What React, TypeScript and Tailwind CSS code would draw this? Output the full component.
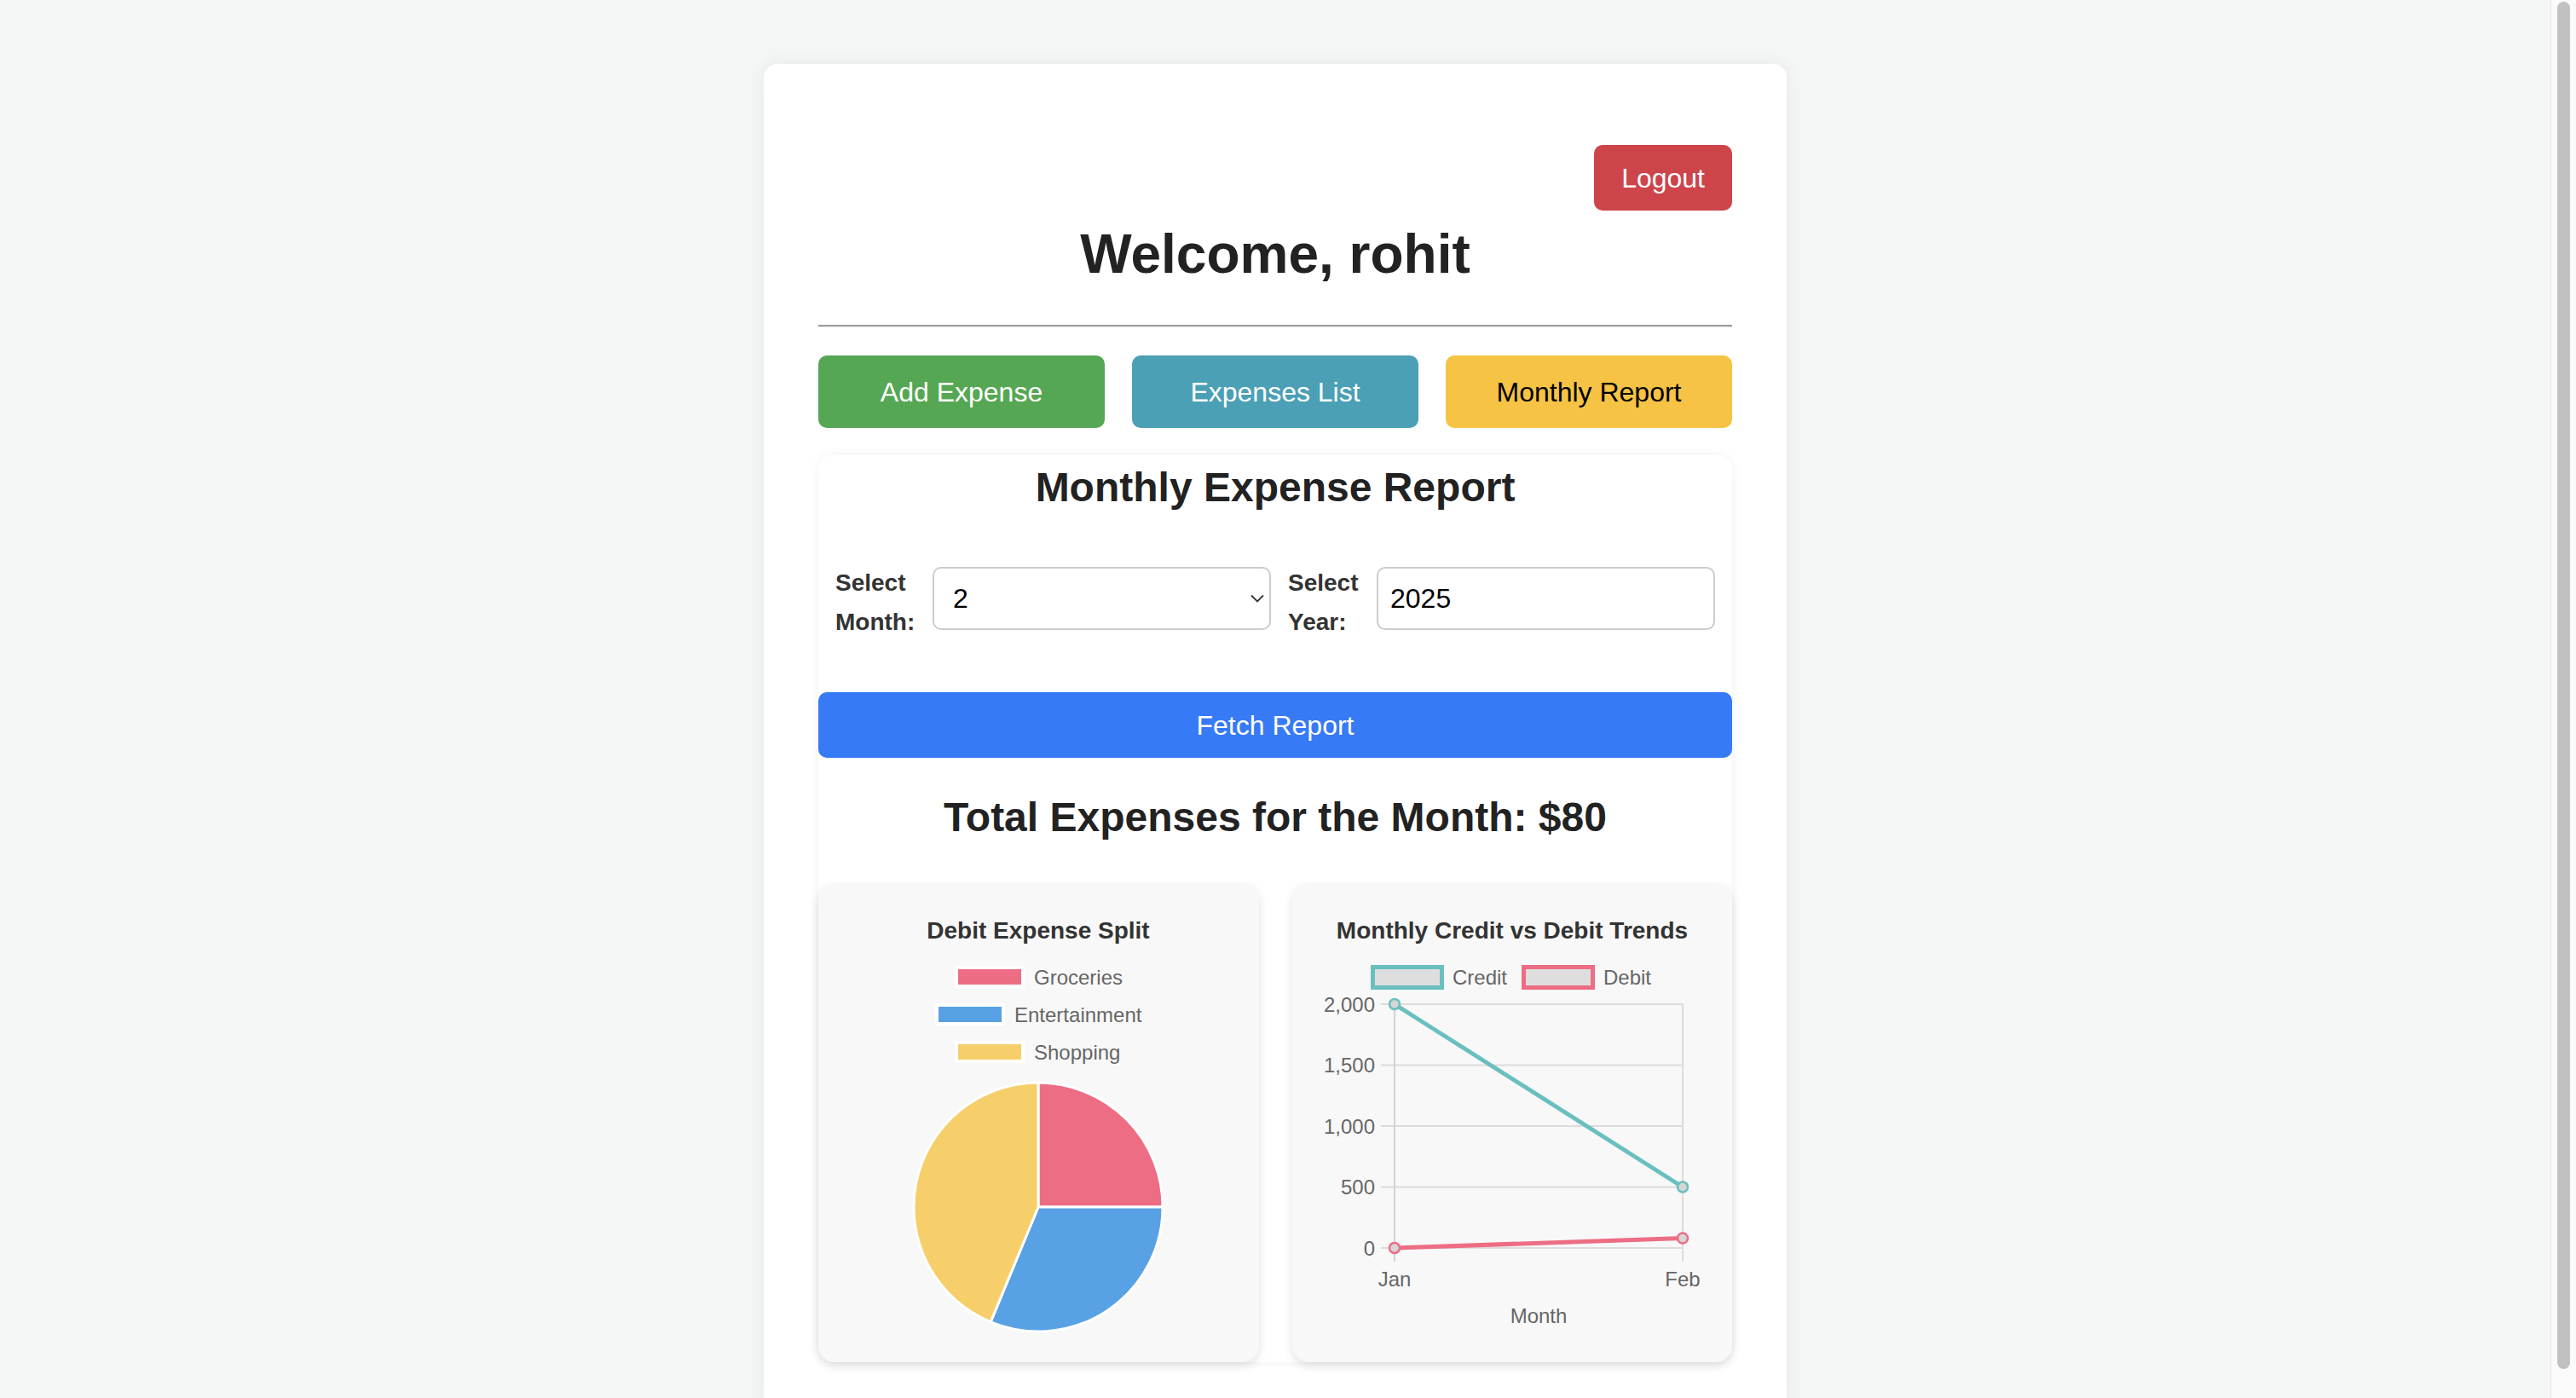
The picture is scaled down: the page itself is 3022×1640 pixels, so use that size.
import React from "react";

const slices = [
  { label: "Groceries", value: 20, color: "#ed6d85" },
  { label: "Entertainment", value: 25, color: "#58a1e4" },
  { label: "Shopping", value: 35, color: "#f6cf6a" },
];

const DebitPie = () => {
  const cx = 258;
  const cy = 379;
  const r = 146;
  const total = slices.reduce((s, d) => s + d.value, 0);
  let start = -Math.PI / 2;
  const paths = slices.map((d) => {
    const angle = (d.value / total) * Math.PI * 2;
    const end = start + angle;
    const x1 = cx + r * Math.cos(start);
    const y1 = cy + r * Math.sin(start);
    const x2 = cx + r * Math.cos(end);
    const y2 = cy + r * Math.sin(end);
    const large = angle > Math.PI ? 1 : 0;
    start = end;
    return { d: `M${cx} ${cy} L${x1} ${y1} A${r} ${r} 0 ${large} 1 ${x2} ${y2} Z`, color: d.color };
  });

  const legend = [
    { label: "Groceries", color: "#ed6d85", box: 162, text: 253, y: 109 },
    { label: "Entertainment", color: "#58a1e4", box: 139, text: 230, y: 153 },
    { label: "Shopping", color: "#f6cf6a", box: 162, text: 253, y: 197 },
  ];

  return (
    <svg width="516" height="561" viewBox="0 0 516 561" fontFamily="'Liberation Sans', Arial, sans-serif">
      <text x="258" y="64" textAnchor="middle" fontSize="28" fontWeight="bold" fill="#333">
        Debit Expense Split
      </text>
      {legend.map((l) => (
        <g key={l.label}>
          <rect x={l.box} y={l.y - 11} width="78" height="22" fill={l.color} stroke="#fff" strokeWidth="4" />
          <text x={l.text} y={l.y + 8.5} fontSize="24" fill="#666">
            {l.label}
          </text>
        </g>
      ))}
      {paths.map((p, i) => (
        <path key={i} d={p.d} fill={p.color} stroke="#fff" strokeWidth="3" strokeLinejoin="round" />
      ))}
    </svg>
  );
};

const TrendLine = () => {
  const left = 120;
  const right = 458;
  const top = 141;
  const bottom = 427;
  const yOf = (v: number) => bottom - (v / 2000) * (bottom - top);
  const ticks = [2000, 1500, 1000, 500, 0];

  return (
    <svg width="516" height="561" viewBox="0 0 516 561" fontFamily="'Liberation Sans', Arial, sans-serif">
      <text x="258" y="64" textAnchor="middle" fontSize="28" fontWeight="bold" fill="#333">
        Monthly Credit vs Debit Trends
      </text>

      {/* legend */}
      <rect x="94.5" y="97.5" width="81" height="24" fill="#dedede" stroke="#6abfbf" strokeWidth="5" />
      <text x="188" y="118" fontSize="24" fill="#666">Credit</text>
      <rect x="271.5" y="97.5" width="81" height="24" fill="#dedede" stroke="#ed6d85" strokeWidth="5" />
      <text x="365" y="118" fontSize="24" fill="#666">Debit</text>

      {/* grid */}
      {ticks.map((t) => (
        <g key={t}>
          <line x1="104" x2={right} y1={yOf(t)} y2={yOf(t)} stroke="#dcdcdc" strokeWidth="2" />
          <text x="97" y={yOf(t) + 8.5} textAnchor="end" fontSize="24" fill="#666">
            {t.toLocaleString("en-US")}
          </text>
        </g>
      ))}
      <line x1={left} x2={left} y1={top} y2="443" stroke="#d2d2d2" strokeWidth="2" />
      <line x1={right} x2={right} y1={top} y2="443" stroke="#dcdcdc" strokeWidth="2" />
      <text x={left} y="472" textAnchor="middle" fontSize="24" fill="#666">Jan</text>
      <text x={right} y="472" textAnchor="middle" fontSize="24" fill="#666">Feb</text>
      <text x="289" y="515" textAnchor="middle" fontSize="24" fill="#666">Month</text>

      {/* series */}
      <line x1={left} y1={yOf(2000)} x2={right} y2={yOf(500)} stroke="#6abfbf" strokeWidth="5" />
      <line x1={left} y1={yOf(0)} x2={right} y2={yOf(80)} stroke="#ed6d85" strokeWidth="5" />
      <circle cx={left} cy={yOf(2000)} r="6" fill="#d6d6d6" stroke="#6abfbf" strokeWidth="2.5" />
      <circle cx={right} cy={yOf(500)} r="6" fill="#d6d6d6" stroke="#6abfbf" strokeWidth="2.5" />
      <circle cx={left} cy={yOf(0)} r="6" fill="#d6d6d6" stroke="#ed6d85" strokeWidth="2.5" />
      <circle cx={right} cy={yOf(80)} r="6" fill="#d6d6d6" stroke="#ed6d85" strokeWidth="2.5" />
    </svg>
  );
};

const App = () => {
  return (
    <div className="flex h-[1640px] overflow-hidden bg-[#f4f5f5] font-['Liberation_Sans',Arial,sans-serif]">
      <main className="flex-1">
        <div className="mx-auto mt-[75px] w-[1200px] rounded-[16px] bg-white px-[64px] pt-[95px] pb-[64px] shadow-[0_0_20px_rgba(0,0,0,0.06)]">
          {/* Header */}
          <div className="flex justify-end">
            <button className="h-[77px] rounded-[10px] bg-[#cd444b] px-[32px] text-[32px] text-white">
              Logout
            </button>
          </div>
          <h1 className="mt-[14px] text-center text-[64px] font-bold leading-[74px] text-[#222]">
            Welcome, rohit
          </h1>
          <div className="mt-[46px] h-[3px] border-t-2 border-b border-t-[#9b9b9b] border-b-[#e6e6e6]" />

          {/* Nav */}
          <div className="mt-[33px] grid grid-cols-3 gap-[32px]">
            <button className="h-[85px] rounded-[10px] bg-[#55a753] text-[32px] text-white">Add Expense</button>
            <button className="h-[85px] rounded-[10px] bg-[#4ba0b5] text-[32px] text-white">Expenses List</button>
            <button className="h-[85px] rounded-[10px] bg-[#f6c344] text-[32px] text-black">Monthly Report</button>
          </div>

          {/* Report */}
          <section className="mt-[32px] rounded-[16px] bg-white pt-[10px] shadow-[0_0_12px_rgba(0,0,0,0.06)]">
            <h2 className="text-center text-[48px] font-bold leading-[56px] text-[#222]">Monthly Expense Report</h2>

            <div className="mt-[61px] flex items-start gap-[20px] px-[20px]">
              <label className="w-[94px] shrink-0 text-[28px] font-bold leading-[46px] text-[#333]">
                Select Month:
              </label>
              <div className="mt-[4px] flex h-[74px] flex-1 items-center justify-between rounded-[10px] border-2 border-[#cccccc] bg-white pr-[6px] pl-[22px] text-[32px] text-black">
                <span>2</span>
                <svg width="16" height="10" viewBox="0 0 16 10" fill="none">
                  <path d="M1 1.5 L8 8.5 L15 1.5" stroke="#333" strokeWidth="1.8" />
                </svg>
              </div>
              <label className="w-[84px] shrink-0 text-[28px] font-bold leading-[46px] text-[#333]">
                Select Year:
              </label>
              <input
                readOnly
                value="2025"
                className="mt-[4px] h-[74px] min-w-0 flex-1 rounded-[10px] border-2 border-[#cccccc] bg-white px-[14px] text-[32px] text-black outline-none"
              />
            </div>

            <button className="mt-[59px] h-[77px] w-full rounded-[10px] bg-[#377af5] text-[32px] text-white">
              Fetch Report
            </button>

            <h2 className="mt-[42px] text-center text-[48px] font-bold leading-[56px] text-[#222]">
              Total Expenses for the Month: $80
            </h2>

            <div className="mt-[50px] grid grid-cols-2 gap-[39px]">
              <div className="h-[561px] overflow-hidden rounded-[20px] bg-[#f8f8f8] shadow-[0_4px_12px_rgba(0,0,0,0.12)]">
                <DebitPie />
              </div>
              <div className="h-[561px] overflow-hidden rounded-[20px] bg-[#f8f8f8] shadow-[0_4px_12px_rgba(0,0,0,0.12)]">
                <TrendLine />
              </div>
            </div>
          </section>
        </div>
      </main>

      {/* scrollbar */}
      <div className="w-[30px] shrink-0 border-l border-[#e8e8e8] bg-[#fafafa] px-[7px] py-[2px]">
        <div className="h-[1604px] rounded-full bg-[#c1c1c1]" />
      </div>
    </div>
  );
};

export default App;
